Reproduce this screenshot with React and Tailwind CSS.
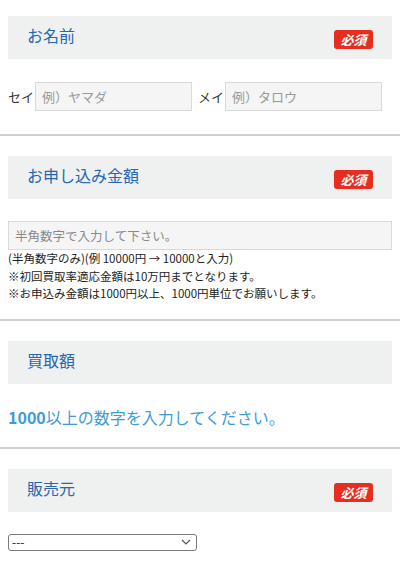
const font = { fontFamily: '"Noto Sans CJK JP", "Noto Sans", sans-serif' };

const Badge = () => (
  <span className="mt-[4px] flex h-[19px] w-[39px] items-center justify-center rounded-[3px] bg-[#e62d1f] text-[13px] font-bold italic leading-none text-white">
    必須
  </span>
);

const Header = ({ title, required }) => (
  <div className="flex h-[43px] items-center justify-between bg-[#eff0f0] pl-[19px] pr-[19px]">
    <h3 className="pb-[5px] text-[16px] leading-none text-[#2567b3]">{title}</h3>
    {required && <Badge />}
  </div>
);

const Divider = () => <hr className="border-0 border-t-2 border-[#cfcfcf]" />;

export default function App() {
  return (
    <div className="min-h-[566px] bg-white text-[#333]" style={font}>
      {/* お名前 */}
      <div className="px-2 pt-4 pb-[23px]">
        <Header title="お名前" required />
        <div className="mt-[23px] flex items-center">
          <span className="shrink-0 whitespace-nowrap text-[13px] leading-none">セイ</span>
          <input
            placeholder="例）ヤマダ"
            className="ml-[1px] h-[29px] w-[157px] shrink-0 border border-[#d9d9d9] bg-[#f5f5f5] px-[6px] text-[13px] placeholder:text-[#999]"
          />
          <span className="ml-[6px] shrink-0 whitespace-nowrap text-[13px] leading-none">メイ</span>
          <input
            placeholder="例）タロウ"
            className="ml-[1px] h-[29px] w-[157px] shrink-0 border border-[#d9d9d9] bg-[#f5f5f5] px-[6px] text-[13px] placeholder:text-[#999]"
          />
        </div>
      </div>
      <Divider />

      {/* お申し込み金額 */}
      <div className="px-2 pt-5 pb-4">
        <Header title="お申し込み金額" required />
        <input
          placeholder="半角数字で入力して下さい。"
          className="mt-[22px] block h-[29px] w-full border border-[#d9d9d9] bg-[#f5f5f5] px-[6px] text-[12.5px] placeholder:text-[#888]"
        />
        <div className="text-[11.5px] leading-[17.5px] text-[#222]">
          <p>(半角数字のみ)(例 10000円 → 10000と入力)</p>
          <p>※初回買取率適応金額は10万円までとなります。</p>
          <p>※お申込み金額は1000円以上、1000円単位でお願いします。</p>
        </div>
      </div>
      <Divider />

      {/* 買取額 */}
      <div className="px-2 pt-5 pb-[18px]">
        <Header title="買取額" />
        <p className="mt-[21px] text-[16px] leading-[24px] text-[#3f9bd7]">
          <span className="font-bold">1000</span>以上の数字を入力してください。
        </p>
      </div>
      <Divider />

      {/* 販売元 */}
      <div className="px-2 pt-5 pb-4">
        <Header title="販売元" required />
        <div className="mt-[22px] flex h-[17px] w-[189px] items-center rounded-[3px] border border-[#7a7a7a] bg-white pr-[5px]">
          <select className="h-full flex-1 appearance-none bg-transparent pl-[3px] text-[12px] leading-none text-[#222] outline-none">
            <option>---</option>
          </select>
          <svg width="10" height="6" viewBox="0 0 10 6" fill="none">
            <path d="M1 1l4 4 4-4" stroke="#555" strokeWidth="1.2" />
          </svg>
        </div>
      </div>
    </div>
  );
}
